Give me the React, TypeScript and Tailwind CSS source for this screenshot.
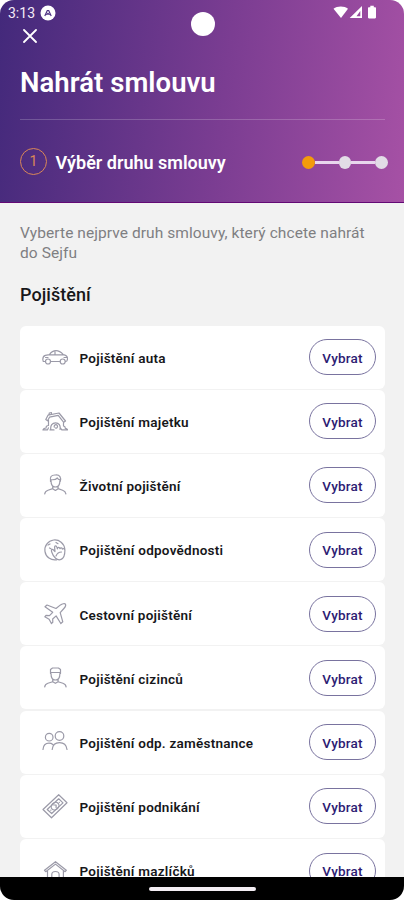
import type { ReactNode } from "react";

const icons: Record<string, ReactNode> = {
  car: (
    <>
      <path d="M3.500 17.500H2.200C1.200 17.500.8 16.500.8 15.400c0-2 .7-3.500 2.600-4l4-.8C9.300 8 11 6.700 14 6.700c3.400 0 5.200 1.600 7.300 3.900 2.700.5 4.200 1.500 4.200 3.800 0 1.800-.5 3.100-1.900 3.100M8.500 17.500h9.600M6.600 10.800h14.500M13 6.900v3.900M3.500 13.500h2.500M22 13.500h2.500" />
      <circle cx="6" cy="17.500" r="2.500" />
      <circle cx="20.700" cy="17.500" r="2.500" />
    </>
  ),
  damagedHouse: (
    <>
      <path d="M3.800 11.500 6 7.200 17 5l6.500 8-1.800 1.300-5.500-7L7.500 9.200 5.600 12.800zM6.500 12.300v5.200c-1.700 0-2.500 1-2.400 2.500-1.500 0-2.700.6-3.200 1.900h4.500l1-2M21.500 14.500v3.500c1.200.2 1.900 1 1.700 2.300 1.300 0 2.100.6 2.400 1.600h-5.800l-1.500-2M7.200 6.800V5l2.200-.5v2M8.800 21.500c-.6-4 1.400-6.700 4.800-6.700 3.300 0 5.200 2.700 4.400 6.700M8 21.900h4M12.300 19.200c-.4-1.500.5-2.500 1.600-2.500s2.100 1.200 1.400 2.600c-.4.8-1.200 1-1.800.7" />
    </>
  ),
  person: (
    <path d="M8.500 9.500C7.700 5 9 2.800 13.500 3c4.300-.4 6 2.500 4.700 6.500M8.800 7.600c3.200.5 5.400-.3 6.500-1.600.4 1 1.400 1.700 2.900 1.800M9 8.500c0 4 1.800 6.500 4.400 6.500s4.500-2.500 4.500-6.500M10.700 14.300v2.400l2.700 1.800 2.700-1.800v-2.400M10.700 16.600l-4.700 1.600c-2 .7-3 1.700-3.300 3.700M16.100 16.600l4.500 1.600c2 .7 3 1.700 3.300 3.700" />
  ),
  globeHand: (
    <>
      <path d="M22.800 12A10 10 0 1 0 14.500 22.800" />
      <path d="M9.500 14.500c-.4-2 .8-2.700 2-1.500l1.500 1.600-.4-4.500c0-1.600 1.800-1.700 2.200-.2l.6 2c.1-1.900 2.100-2 2.500-.2.500-1.300 2.400-1.100 2.500.4 1-1 2.500-.3 2.500 1.200 0 4.500-.5 7.800-3.800 9.100-3.900 1.500-7.600-1.800-9.600-7.900zM6 8l2-1M7.500 11l1.500.8M14 5.500l2 1.200M14 19c1-2.500 3-4 5.500-4" />
    </>
  ),
  plane: (
    <path d="m3 5.700 2-1.700 9 3.500 4.500-3.600c1.600-1.200 4.200-1.600 4.800-.9.600.8 0 3-1.400 4.500l-3.700 4.200 2.600 9.100-2 1.700-4.700-7.600-3.400 3.100.1 3.300-1.400 1.200-2.300-4.300-4.300-2.400L4 14.400l3.500.2 3.200-3.300z" />
  ),
  foreigner: (
    <path d="M8.500 8.500V4.500L10.500 3h6l2 1.500v4M8.500 7.500h10M9 8.500c0 4 1.800 6.500 4.400 6.500s4.500-2.500 4.500-6.500M10.700 14.300v2.500l2.700 1.500 2.700-1.500v-2.500M10.700 16.800l-4.800 1.500c-2 .6-3 1.700-3.200 3.600M16.100 16.800l4.800 1.500c2 .6 3 1.700 3.200 3.600" />
  ),
  people: (
    <>
      <circle cx="7.200" cy="8.200" r="3.800" />
      <circle cx="17.500" cy="7" r="4.300" />
      <path d="M1 20.500c.3-4.200 2.700-6.300 6-6.300 1.500 0 2.800.4 3.800 1.300M10.200 20.500c.5-4.700 3-6.900 7.300-6.900s6.900 2.200 7.500 6.900" />
    </>
  ),
  money: (
    <>
      <path d="m1 16.500 15.700-14.800 8.300 8L9.500 24.800zM5.200 16.500 16.700 5.800l4.300 4.100L9.700 20.500z" />
      <ellipse cx="13.100" cy="13.200" rx="4.200" ry="3.400" transform="rotate(-45 13.100 13.200)" />
      <path d="M11.800 12h2.300v2.600M17.300 9.300h.1M8.800 17.200h.1" />
    </>
  ),
  house: (
    <path d="m2.500 12.300 11-8.600 10.800 8.600-1.200 1.400-9.600-7.600-9.800 7.600zM5.500 13V23h4.300v-6.500c0-2 1.200-3 3.600-3s3.700 1 3.700 3V23h4.300V13" />
  ),
};

const rows = [
  { icon: "car", label: "Pojištění auta" },
  { icon: "damagedHouse", label: "Pojištění majetku" },
  { icon: "person", label: "Životní pojištění" },
  { icon: "globeHand", label: "Pojištění odpovědnosti" },
  { icon: "plane", label: "Cestovní pojištění" },
  { icon: "foreigner", label: "Pojištění cizinců" },
  { icon: "people", label: "Pojištění odp. zaměstnance" },
  { icon: "money", label: "Pojištění podnikání" },
  { icon: "house", label: "Pojištění mazlíčků" },
];

function StatusBar() {
  return (
    <div className="flex h-[26px] items-center justify-between pl-2 pr-[25px] text-[#f4ebf7]">
      <div className="flex items-center gap-[5px]">
        <span className="text-[14px] leading-none">3:13</span>
        <svg width="16" height="16" viewBox="0 0 16 16" className="-mt-px">
          <circle cx="8" cy="8" r="7.500" fill="#fff" />
          <path d="M4.800 11 7.300 5.500h1.400l2.500 5.500M6.500 9.800 8 8.300l1.500 1.500" fill="none" stroke="#4d3183" strokeWidth="1.200" />
        </svg>
      </div>
      <svg width="46" height="14" viewBox="0 0 46 14" fill="#fff" className="-mt-0.5">
        <path d="M.5 3.800C4.200.7 11.500.7 15 3.800L8 13z" />
        <path fillRule="evenodd" d="M29 1v12H16.700zM27.300 6l-3.800 5.300h3.800z" />
        <path d="M37.300 2.300V.8h3.500v1.500h1.200c.6 0 1 .4 1 1v9c0 .7-.4 1.200-1 1.200h-6c-.6 0-1-.5-1-1.200v-9c0-.6.4-1 1-1z" />
      </svg>
    </div>
  );
}

function Header() {
  return (
    <header className="h-[203px] shrink-0 border-b border-[#630975] bg-linear-[97deg] from-[#43297b] from-0% via-[#7b3d92] via-55% to-[#a651a5]">
      <StatusBar />
      <div className="flex h-5 items-center pl-[23px]">
        <svg width="14" height="14" viewBox="0 0 14 14" stroke="#fff" strokeWidth="1.800" strokeLinecap="round">
          <path d="m1 1 12 12M13 1 1 13" />
        </svg>
      </div>
      <div className="pl-5 pr-[19px]">
        <h1 className="flex h-[74px] items-center border-b border-white/20 text-[27.500px] font-semibold tracking-[0.050px] text-white">
          Nahrát smlouvu
        </h1>
        <div className="mt-[28px] flex h-[27px] items-center">
          <span className="flex size-[27px] items-center justify-center rounded-full border-[1.500px] border-[#da8757] text-[14px] text-[#da8757]">
            1
          </span>
          <span className="ml-[8.500px] mt-px text-[18px] font-semibold text-white">Výběr druhu smlouvy</span>
          <div className="-mr-[2.500px] ml-auto mt-[2px] flex items-center">
            <i className="size-[12.500px] rounded-full bg-[#f39b0b]" />
            <i className="h-[3px] w-[24px] bg-[#e8d6ed]" />
            <i className="size-[12.500px] rounded-full bg-[#e2dce6]" />
            <i className="h-[3px] w-[24px] bg-[#e8d6ed]" />
            <i className="size-[12.500px] rounded-full bg-[#e2dce6]" />
          </div>
        </div>
      </div>
    </header>
  );
}

export default function App() {
  return (
    <div className="h-[900px] w-[404px] overflow-hidden bg-white font-['Roboto',sans-serif]">
      <div className="relative flex h-full flex-col overflow-hidden rounded-[14px] bg-[#f2f2f2]">
        <Header />
        <i className="absolute left-[191px] top-3 size-6 rounded-full bg-white" />
        <main className="min-h-0 flex-1 overflow-hidden pl-5 pr-[19px] pt-[21px]">
          <p className="text-[15.500px] leading-[19.500px] tracking-[0.070px] text-[#7f7f82]">
            Vyberte nejprve druh smlouvy, který chcete nahrát
            <br />
            do Sejfu
          </p>
          <h2 className="mt-5 text-[18px] font-medium leading-6 tracking-[0.050px] text-[#171719]">Pojištění</h2>
          <ul className="mt-[18.500px] flex flex-col gap-[1.200px]">
            {rows.map((row) => (
              <li key={row.label} className="flex h-[63px] shrink-0 items-center rounded-[6px] bg-white pl-[22px] pr-[9px]">
                <svg
                  width="26"
                  height="26"
                  viewBox="0 0 26 26"
                  fill="none"
                  stroke="#9b9aa8"
                  strokeWidth="1.200"
                  strokeLinecap="round"
                  strokeLinejoin="round"
                >
                  {icons[row.icon]}
                </svg>
                <span className="ml-[11.500px] mt-[2px] text-[13.500px] font-semibold tracking-[0.240px] text-[#17171a]">
                  {row.label}
                </span>
                <button className="ml-auto h-9 w-[67px] rounded-full border border-[#79739f] pt-0.5 text-[13.500px] font-medium tracking-[0.200px] text-[#2d1b73]">
                  Vybrat
                </button>
              </li>
            ))}
          </ul>
        </main>
        <div className="flex h-[23px] shrink-0 justify-center bg-black pt-[9.500px]">
          <i className="h-[4.500px] w-[107px] rounded-full bg-[#f3edf3]" />
        </div>
      </div>
    </div>
  );
}
